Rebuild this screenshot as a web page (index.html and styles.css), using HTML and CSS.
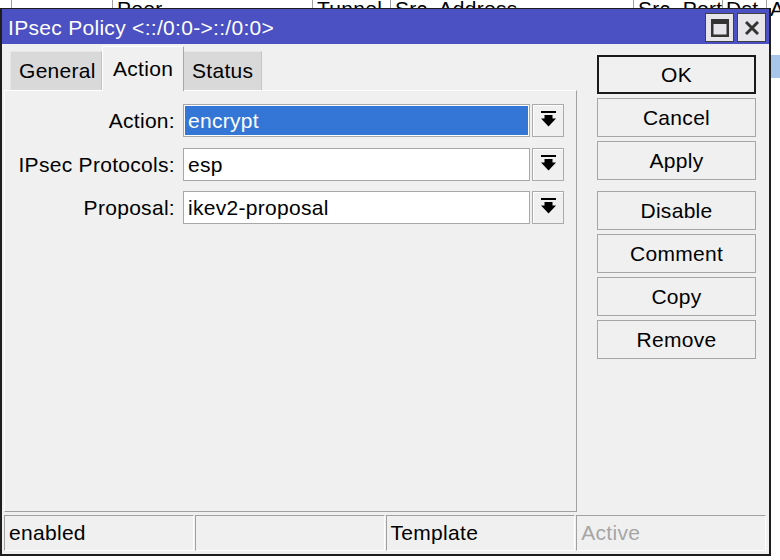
FILE: index.html
```html
<!DOCTYPE html>
<html>
<head>
<meta charset="utf-8">
<title>IPsec Policy</title>
<link rel="stylesheet" href="styles.css">
</head>
<body>
<div class="desk">
  <div class="bg-head">
    <div class="hc hc0"></div>
    <div class="hc hc1"></div>
    <div class="hc hc2">Peer</div>
    <div class="hc hc3">Tunnel</div>
    <div class="hc hc4">Src. Address</div>
    <div class="hc hc5">Src. Port</div>
    <div class="hc hc6">Dst.</div>
    <div class="hc hc7">A</div>
  </div>
  <div class="bg-gap"></div>
  <div class="bg-sel"></div>
</div>

<div class="window">
  <div class="titlebar">
    <span class="title">IPsec Policy &lt;::/0:0-&gt;::/0:0&gt;</span>
    <div class="tb-btns">
      <div class="tb-btn">
        <svg width="18" height="18" viewBox="0 0 18 18"><path fill="#333" fill-rule="evenodd" d="M0 0H18V18H0Z M2.5 5H15.5V15.5H2.5Z"/></svg>
      </div>
      <div class="tb-btn">
        <svg width="14" height="14" viewBox="0 0 14 14"><path stroke="#333" stroke-width="3" d="M1 1L13 13M13 1L1 13"/></svg>
      </div>
    </div>
  </div>

  <div class="main">
    <div class="left">
      <div class="tabs">
        <div class="tab tab-general">General</div>
        <div class="tab tab-active">Action</div>
        <div class="tab tab-status">Status</div>
      </div>
      <div class="panel">
        <div class="form">
          <div class="row">
            <div class="label">Action:</div>
            <div class="input input-selected">encrypt</div>
            <div class="dd"><svg width="15" height="16" viewBox="0 0 15 16"><rect x="0" y="0" width="15" height="2"/><rect x="3.5" y="4" width="8" height="4"/><polygon points="0,7.5 15,7.5 7.5,15.5"/></svg></div>
          </div>
          <div class="row">
            <div class="label">IPsec Protocols:</div>
            <div class="input">esp</div>
            <div class="dd"><svg width="15" height="16" viewBox="0 0 15 16"><rect x="0" y="0" width="15" height="2"/><rect x="3.5" y="4" width="8" height="4"/><polygon points="0,7.5 15,7.5 7.5,15.5"/></svg></div>
          </div>
          <div class="row">
            <div class="label">Proposal:</div>
            <div class="input">ikev2-proposal</div>
            <div class="dd"><svg width="15" height="16" viewBox="0 0 15 16"><rect x="0" y="0" width="15" height="2"/><rect x="3.5" y="4" width="8" height="4"/><polygon points="0,7.5 15,7.5 7.5,15.5"/></svg></div>
          </div>
        </div>
      </div>
    </div>
    <div class="right">
      <div class="btn btn-default">OK</div>
      <div class="btn">Cancel</div>
      <div class="btn">Apply</div>
      <div class="btn btn-sep">Disable</div>
      <div class="btn">Comment</div>
      <div class="btn">Copy</div>
      <div class="btn">Remove</div>
    </div>
  </div>

  <div class="status">
    <div class="cell">enabled</div>
    <div class="cell"></div>
    <div class="cell">Template</div>
    <div class="cell cell-dim">Active</div>
  </div>
</div>
</body>
</html>
```

FILE: styles.css
```css
html, body {
  margin: 0;
  padding: 0;
}
body {
  width: 780px;
  height: 560px;
  overflow: hidden;
  background: #ffffff;
  font-family: "Liberation Sans", Arial, sans-serif;
  font-size: 21px;
  letter-spacing: 0.3px;
  color: #000;
  position: relative;
}

/* background list behind the dialog */
.bg-head {
  display: flex;
  height: 26px;
  margin-top: -3px;
  line-height: 24px;
}
.hc {
  box-sizing: border-box;
  border-left: 1px solid #a0a0a0;
  padding-left: 4px;
  white-space: nowrap;
  overflow: hidden;
  flex: none;
}
.hc0 { width: 11px; border-left: none; }
.hc1 { width: 101px; }
.hc2 { width: 200px; }
.hc3 { width: 78px; }
.hc4 { width: 243px; }
.hc5 { width: 89px; }
.hc6 { width: 44px; padding-left: 3px; }
.hc7 { width: 40px; padding-left: 3px; }
.bg-gap { height: 32px; }
.bg-sel { height: 23px; background: #a8c6ea; }

/* dialog window */
.window {
  position: absolute;
  left: 0;
  top: 8px;
  width: 771px;
  height: 548px;
  box-sizing: border-box;
  border: 2px solid #1e1e1e;
  border-top-width: 1px;
  background: #f0f0f0;
  display: flex;
  flex-direction: column;
}

.titlebar {
  height: 35px;
  flex: none;
  background: #4b51c2;
  display: flex;
  justify-content: space-between;
  align-items: flex-start;
  padding-left: 6px;
  padding-right: 3px;
}
.title {
  color: #fff;
  line-height: 32px;
  padding-top: 3px;
  white-space: nowrap;
}
.tb-btns {
  display: flex;
  gap: 3px;
  margin-top: 4px;
}
.tb-btn {
  width: 29px;
  height: 29px;
  box-sizing: border-box;
  border: 1px solid #404040;
  background: #e6e6ea;
  display: flex;
  align-items: center;
  justify-content: center;
}
.tb-btn svg { display: block; }

.main {
  height: 468px;
  flex: none;
  display: flex;
}
.left {
  width: 576px;
  flex: none;
  display: flex;
  flex-direction: column;
}
.tabs {
  height: 46px;
  flex: none;
  display: flex;
  align-items: flex-end;
  padding-left: 8px;
  position: relative;
  z-index: 1;
}
.tab {
  box-sizing: border-box;
  height: 39px;
  line-height: 38px;
  background: #d9d9d9;
  border-top: 1px solid #e6e6e6;
  border-left: 1px solid #e6e6e6;
  border-right: 1px solid #c4c4c4;
  white-space: nowrap;
}
.tab-general { padding: 0 6px 0 8px; width: 92px; }
.tab-status { padding: 0 7px 0 8px; width: 78px; border-left: none; }
.tab-active {
  height: 45px;
  margin-bottom: -1px;
  line-height: 43px;
  padding: 0 10px;
  width: 82px;
  background: #f0f0f0;
  border-top: 1px solid #ffffff;
  border-left: 1px solid #ffffff;
  border-right: 1px solid #a8a8a8;
  padding-bottom: 1px;
}

.panel {
  flex: 1;
  margin-left: 2px;
  width: 573px;
  box-sizing: border-box;
  border-top: 1px solid #ffffff;
  border-left: 1px solid #ffffff;
  border-right: 1px solid #a0a0a0;
  border-bottom: 1px solid #a0a0a0;
  padding-top: 13px;
}
.form {
  display: flex;
  flex-direction: column;
  gap: 10.5px;
}
.row {
  display: flex;
  height: 33px;
}
.label {
  width: 170px;
  margin-right: 8px;
  text-align: right;
  line-height: 33px;
  white-space: nowrap;
}
.input {
  width: 347px;
  height: 33px;
  box-sizing: border-box;
  border: 1px solid #a8a8a8;
  background: #ffffff;
  line-height: 31px;
  padding-left: 4px;
  white-space: nowrap;
}
.input-selected {
  background: #3476d6;
  color: #ffffff;
  box-shadow: inset 0 0 0 1px #ffffff;
}
.dd {
  width: 32px;
  height: 33px;
  margin-left: 2px;
  box-sizing: border-box;
  border: 1px solid #ababab;
  box-shadow: inset 1px 1px 0 #ffffff;
  background: #f0f0f0;
  display: flex;
  justify-content: center;
  align-items: flex-start;
  padding-top: 6px;
}
.dd svg { display: block; fill: #000; }

.right {
  flex: 1;
  padding-left: 19px;
  padding-top: 11px;
  display: flex;
  flex-direction: column;
  gap: 4px;
}
.btn {
  width: 159px;
  height: 39px;
  box-sizing: border-box;
  border: 1px solid #a6a6a6;
  background: #f0f0f0;
  text-align: center;
  line-height: 37px;
  white-space: nowrap;
}
.btn-default {
  border: 2px solid #1a1a1a;
  line-height: 35px;
}
.btn-sep { margin-top: 7px; }

.status {
  flex: none;
  margin-top: 3px;
  padding: 0 3px 0 2px;
  height: 36px;
  display: grid;
  grid-template-columns: repeat(4, 1fr);
  gap: 1px;
}
.cell {
  box-sizing: border-box;
  height: 36px;
  border-top: 1px solid #a0a0a0;
  border-left: 1px solid #a0a0a0;
  border-right: 1px solid #ffffff;
  border-bottom: 1px solid #ffffff;
  line-height: 34px;
  padding-left: 4px;
  white-space: nowrap;
  overflow: hidden;
}
.cell-dim { color: #a6a6a6; }
```
